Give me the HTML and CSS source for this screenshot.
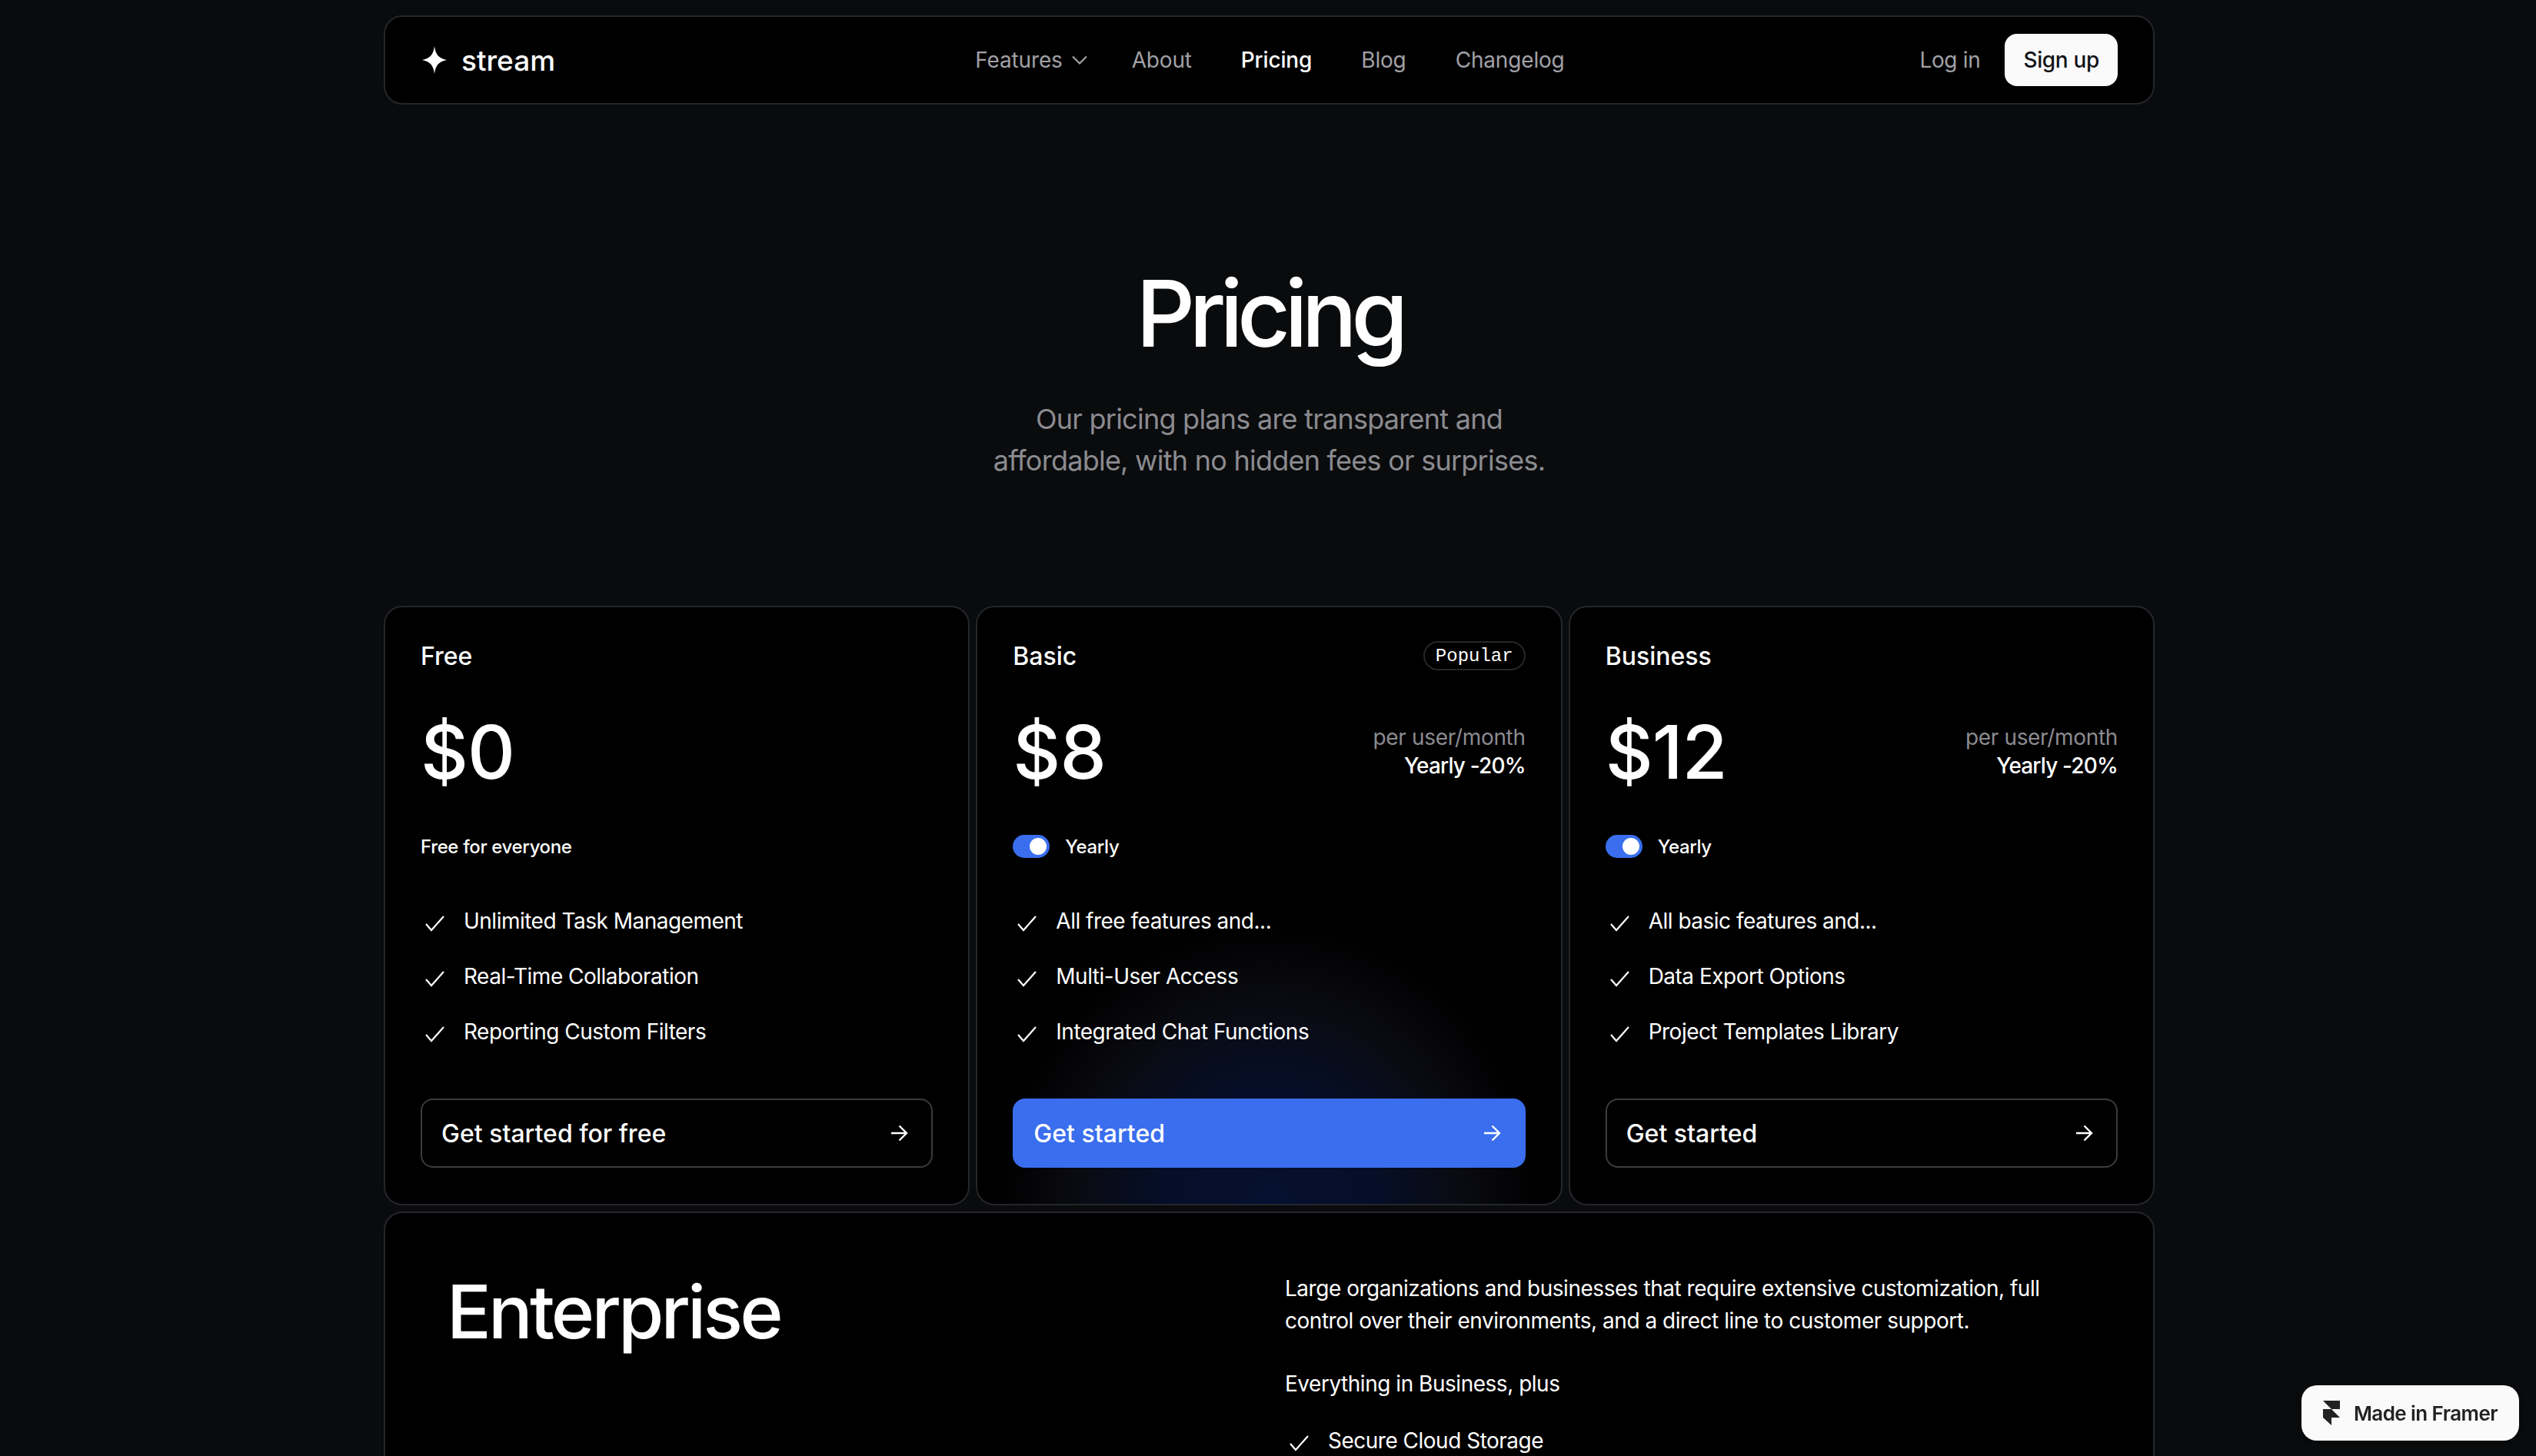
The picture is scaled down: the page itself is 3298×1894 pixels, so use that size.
FILE: index.html
```html
<!DOCTYPE html>
<html lang="en">
<head>
  <meta charset="UTF-8" />
  <title>Pricing - stream</title>
  <link rel="stylesheet" href="styles.css">
</head>
<body>
<svg class="defs" width="0" height="0">
  <symbol id="check" viewBox="0 0 32 32"><path d="M7 17l7 8L30 7" fill="none" stroke="currentColor" stroke-width="2.2"/></symbol>
  <symbol id="arrow" viewBox="0 0 24 24"><path d="M2 12h19M12.500 2.500L22 12l-9.500 9.500" fill="none" stroke="currentColor" stroke-width="2.4"/></symbol>
</svg>

<div class="container">
  <nav class="nav">
    <a class="logo" href="#">
      <svg class="logo-star" viewBox="0 0 32 36"><path d="M16 0c1.500 11 5 15.500 16 18-11 2.500-14.500 7-16 18-1.500-11-5-15.500-16-18 11-2.500 14.500-7 16-18z" fill="#fff"/></svg>
      <span>stream</span>
    </a>
    <div class="nav-links">
      <a href="#" class="features">Features
        <svg class="chevron" viewBox="0 0 20 12"><path d="M1 1.500l9 9 9-9" fill="none" stroke="currentColor" stroke-width="2.2"/></svg>
      </a>
      <a href="#">About</a>
      <a href="#" class="active">Pricing</a>
      <a href="#">Blog</a>
      <a href="#">Changelog</a>
    </div>
    <div class="nav-right">
      <a href="#">Log in</a>
      <a href="#" class="signup">Sign up</a>
    </div>
  </nav>

  <header class="hero">
    <h1>Pricing</h1>
    <p>Our pricing plans are transparent and<br>affordable, with no hidden fees or surprises.</p>
  </header>

  <section class="plans">
    <div class="card">
      <div class="card-head"><span>Free</span></div>
      <div class="price-row"><span class="price">$0</span></div>
      <div class="toggle-row"><span class="small">Free for everyone</span></div>
      <ul class="features-list">
        <li><svg class="check"><use href="#check"/></svg>Unlimited Task Management</li>
        <li><svg class="check"><use href="#check"/></svg>Real-Time Collaboration</li>
        <li><svg class="check"><use href="#check"/></svg>Reporting Custom Filters</li>
      </ul>
      <a href="#" class="btn">Get started for free<svg class="arrow"><use href="#arrow"/></svg></a>
    </div>

    <div class="card card-popular">
      <div class="card-head"><span>Basic</span><span class="badge">Popular</span></div>
      <div class="price-row">
        <span class="price">$8</span>
        <div class="price-note"><span class="muted">per user/month</span><span class="yearly">Yearly -20%</span></div>
      </div>
      <div class="toggle-row"><span class="toggle"></span><span class="small">Yearly</span></div>
      <ul class="features-list">
        <li><svg class="check"><use href="#check"/></svg>All free features and...</li>
        <li><svg class="check"><use href="#check"/></svg>Multi-User Access</li>
        <li><svg class="check"><use href="#check"/></svg>Integrated Chat Functions</li>
      </ul>
      <a href="#" class="btn btn-blue">Get started<svg class="arrow"><use href="#arrow"/></svg></a>
    </div>

    <div class="card">
      <div class="card-head"><span>Business</span></div>
      <div class="price-row">
        <span class="price">$12</span>
        <div class="price-note"><span class="muted">per user/month</span><span class="yearly">Yearly -20%</span></div>
      </div>
      <div class="toggle-row"><span class="toggle"></span><span class="small">Yearly</span></div>
      <ul class="features-list">
        <li><svg class="check"><use href="#check"/></svg>All basic features and...</li>
        <li><svg class="check"><use href="#check"/></svg>Data Export Options</li>
        <li><svg class="check"><use href="#check"/></svg>Project Templates Library</li>
      </ul>
      <a href="#" class="btn">Get started<svg class="arrow"><use href="#arrow"/></svg></a>
    </div>
  </section>

  <section class="enterprise">
    <h2>Enterprise</h2>
    <div class="enterprise-body">
      <p>Large organizations and businesses that require extensive customization, full control over their environments, and a direct line to customer support.</p>
      <p class="plus">Everything in Business, plus</p>
      <ul class="features-list">
        <li><svg class="check"><use href="#check"/></svg>Secure Cloud Storage</li>
      </ul>
    </div>
  </section>
</div>

<a href="#" class="framer-badge">
  <svg class="framer-logo" viewBox="0 0 22 32"><path d="M0 0h22v11H11zM0 11h11l11 11H11v10L0 22z" fill="#222"/></svg>
  Made in Framer
</a>
</body>
</html>
```

FILE: styles.css
```css
html, body {
  height: 100%;
  overflow: hidden;
}
body {
  margin: 0;
  background: #0a0b0d;
  color: #fff;
  font-family: 'Inter', sans-serif;
  font-size: 28px;
  letter-spacing: -0.012em;
}
a {
  color: inherit;
  text-decoration: none;
}
ul {
  list-style: none;
  margin: 0;
  padding: 0;
}
.defs {
  display: block;
  height: 0;
}
.container {
  width: 2303px;
  margin-left: 499px;
  padding-top: 20px;
}

/* nav */
.nav {
  display: grid;
  grid-template-columns: 1fr auto 1fr;
  align-items: center;
  height: 116px;
  box-sizing: border-box;
  padding: 0 46px 0 48px;
  background: #000;
  border: 2px solid #25262a;
  border-radius: 24px;
}
.logo {
  display: flex;
  align-items: center;
  gap: 19px;
  font-size: 37px;
  font-weight: 500;
  letter-spacing: 0;
}
.logo-star {
  width: 32px;
  height: 36px;
}
.nav-links {
  display: flex;
  align-items: center;
  gap: 64px;
  color: #a1a1a6;
  letter-spacing: -0.006em;
}
.nav-links .active {
  color: #fff;
  font-weight: 500;
}
.features {
  display: flex;
  align-items: center;
  gap: 12px;
  margin-right: -6px;
}
.chevron {
  width: 20px;
  height: 12px;
}
.nav-right {
  display: flex;
  justify-content: flex-end;
  align-items: center;
  gap: 32px;
  color: #a1a1a6;
}
.signup {
  display: flex;
  align-items: center;
  height: 68px;
  padding: 0 24px;
  background: #fafafa;
  color: #111318;
  font-weight: 500;
  border-radius: 16px;
}

/* hero */
.hero {
  text-align: center;
  padding-top: 200px;
  height: 652px;
  box-sizing: border-box;
}
.hero h1 {
  margin: 0;
  font-size: 120px;
  line-height: 144px;
  font-weight: 500;
  letter-spacing: -0.065em;
}
.hero p {
  margin: 38px 0 0;
  font-size: 36px;
  line-height: 54px;
  color: #8b8b90;
  letter-spacing: -0.021em;
}

/* plans */
.plans {
  display: grid;
  grid-template-columns: repeat(3, 1fr);
  gap: 8px;
}
.card {
  height: 780px;
  box-sizing: border-box;
  padding: 44px 46px 46px;
  background: #000;
  border: 2px solid #25262a;
  border-radius: 24px;
}
.card-popular {
  background: radial-gradient(ellipse 46% 47% at 50% 100%, #061030 0%, #050e28 40%, #0a0b11 72%, #000 100%), #000;
}
.card-head {
  display: flex;
  justify-content: space-between;
  align-items: center;
  height: 38px;
  font-size: 32px;
  font-weight: 500;
  letter-spacing: 0;
}
.badge {
  display: flex;
  align-items: center;
  height: 34px;
  padding: 0 14px;
  border: 2px solid #25262a;
  border-radius: 20px;
  font-family: 'Liberation Mono', monospace;
  font-size: 24px;
  font-weight: 400;
}
.price-row {
  display: flex;
  justify-content: space-between;
  align-items: center;
  height: 112px;
  margin-top: 50px;
}
.price {
  font-size: 96px;
  font-weight: 500;
  letter-spacing: -0.01em;
}
.price-note {
  display: flex;
  flex-direction: column;
  align-items: flex-end;
  font-size: 28px;
  line-height: 37px;
  font-weight: 500;
}
.muted {
  color: #8b8b90;
  font-weight: 400;
}
.yearly {
  letter-spacing: -0.03em;
}
.toggle-row {
  display: flex;
  align-items: center;
  gap: 20px;
  height: 30px;
  margin-top: 52px;
}
.small {
  font-size: 24px;
  font-weight: 500;
  letter-spacing: -0.015em;
}
.toggle {
  display: flex;
  justify-content: flex-end;
  align-items: center;
  width: 48px;
  height: 30px;
  box-sizing: border-box;
  padding-right: 4px;
  background: #3a6eee;
  border-radius: 15px;
}
.toggle::after {
  content: "";
  width: 22px;
  height: 22px;
  background: #fff;
  border-radius: 50%;
}
.features-list {
  display: flex;
  flex-direction: column;
  gap: 30px;
  margin-top: 61px;
  letter-spacing: -0.018em;
}
.features-list li {
  display: flex;
  align-items: center;
  gap: 24px;
  height: 42px;
  font-size: 28px;
}
.check {
  width: 32px;
  height: 32px;
  flex: none;
  margin-top: 6px;
}
.btn {
  display: flex;
  justify-content: space-between;
  align-items: center;
  height: 90px;
  margin-top: 66px;
  box-sizing: border-box;
  padding: 0 30px 0 25px;
  border: 2px solid #3a3b40;
  border-radius: 16px;
  font-size: 32px;
  font-weight: 500;
  letter-spacing: 0;
}
.btn-blue {
  background: #3a6eee;
  border-color: #3a6eee;
}
.arrow {
  width: 24px;
  height: 24px;
}

/* enterprise */
.enterprise {
  display: grid;
  grid-template-columns: 1090px 1fr;
  height: 600px;
  box-sizing: border-box;
  margin-top: 8px;
  padding: 70px 82px 70px 80px;
  background: #000;
  border: 2px solid #25262a;
  border-radius: 24px;
}
.enterprise h2 {
  margin: 0;
  font-size: 96px;
  line-height: 116px;
  font-weight: 500;
  letter-spacing: -0.04em;
}
.enterprise-body p {
  margin: 7px 0 0;
  line-height: 42px;
  max-width: 1030px;
  letter-spacing: -0.017em;
}
.enterprise-body .plus {
  margin-top: 40px;
}
.enterprise-body .features-list {
  margin-top: 32px;
}

/* badge in the corner */
.framer-badge {
  position: fixed;
  right: 22px;
  bottom: 20px;
  display: flex;
  align-items: center;
  gap: 18px;
  height: 72px;
  box-sizing: border-box;
  padding: 0 28px;
  background: #fafafa;
  color: #222;
  border-radius: 20px;
  font-size: 26px;
  font-weight: 600;
  letter-spacing: -0.022em;
  box-shadow: 0 2px 8px rgba(0,0,0,0.3);
}
.framer-logo {
  width: 22px;
  height: 32px;
}
```
